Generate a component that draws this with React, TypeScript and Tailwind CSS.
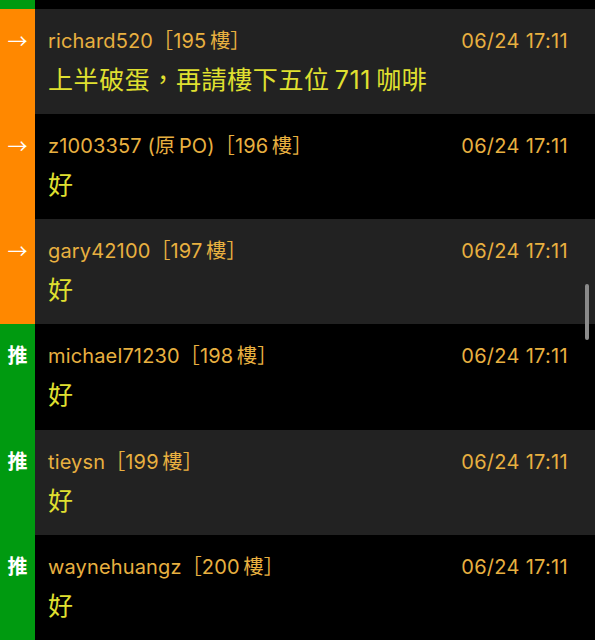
import React from "react";

type Row = {
  kind: "arrow" | "push";
  user: string;
  floor: string;
  text: string;
  dark: boolean;
};

const rows: Row[] = [
  { kind: "arrow", user: "richard520", floor: "195", text: "上半破蛋，再請樓下五位\u2009711\u2009咖啡", dark: true },
  { kind: "arrow", user: "z1003357 (原\u2009PO)", floor: "196", text: "好", dark: false },
  { kind: "arrow", user: "gary42100", floor: "197", text: "好", dark: true },
  { kind: "push", user: "michael71230", floor: "198", text: "好", dark: false },
  { kind: "push", user: "tieysn", floor: "199", text: "好", dark: true },
  { kind: "push", user: "waynehuangz", floor: "200", text: "好", dark: false },
];

const font = { fontFamily: '"Inter", "Noto Sans CJK TC", sans-serif' };

export default function App() {
  return (
    <div className="relative w-[595px] h-[640px] overflow-hidden bg-black" style={font}>
      <div className="flex h-[8.5px]">
        <div className="w-[35px] bg-[#009a10]" />
        <div className="flex-1 bg-black" />
      </div>
      {rows.map((r, i) => (
        <div key={i} className={`flex h-[105.25px] ${r.dark ? "bg-[#222222]" : "bg-black"}`}>
          <div
            className={`w-[35px] shrink-0 flex justify-center pt-[19px] ${
              r.kind === "arrow" ? "bg-[#ff8800]" : "bg-[#009a10]"
            }`}
          >
            {r.kind === "arrow" ? (
              <span className="text-white text-[20px] leading-[26px] font-['Noto_Sans_CJK_TC']">→</span>
            ) : (
              <span className="text-white text-[20px] leading-[26px] font-bold">推</span>
            )}
          </div>
          <div className="flex-1 flex flex-col pl-[13px] pr-[27px] pt-[19px]">
            <div className="flex justify-between text-[20px] leading-[26px] text-[#e8b040]">
              <span className="tracking-[0.15px]">
                {r.user}［{r.floor}{"\u2009"}樓］
              </span>
              <span className="tracking-[0.3px]">06/24 17:11</span>
            </div>
            <div className="mt-[10px] text-[25px] leading-[32px] text-[#e0e030] tracking-[0.6px]">{r.text}</div>
          </div>
        </div>
      ))}
      <div className="absolute left-[585px] top-[284px] w-[4px] h-[56px] rounded-full bg-[#8a8a8a]" />
    </div>
  );
}
